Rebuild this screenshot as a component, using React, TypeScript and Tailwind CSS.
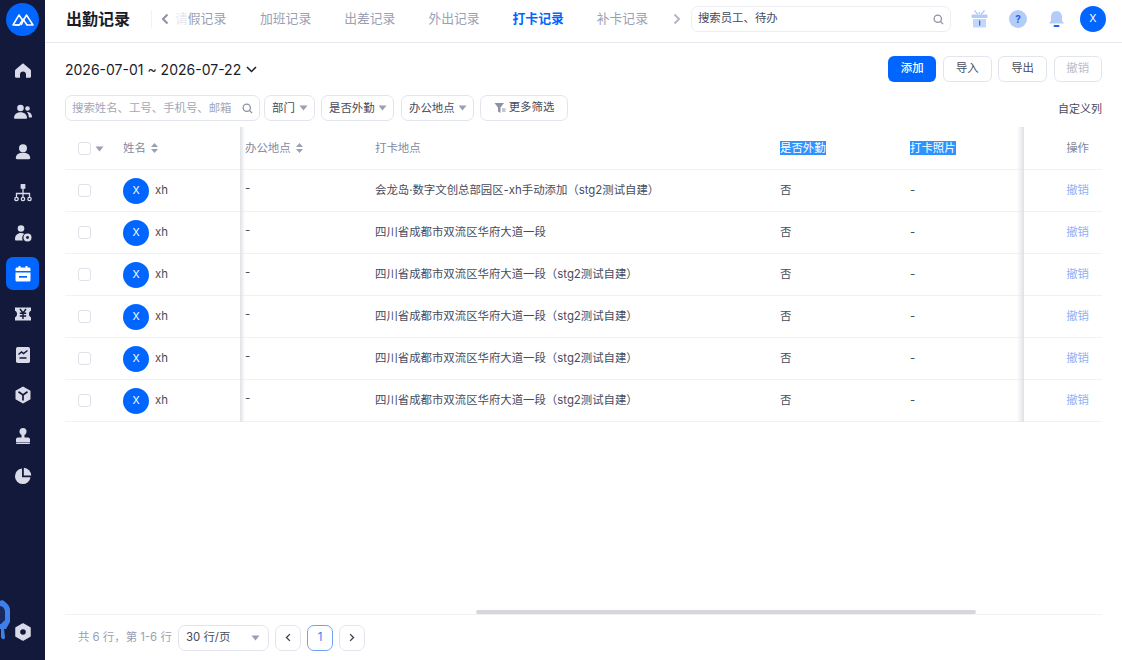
import React from "react";

const font = { fontFamily: '"Inter","Noto Sans CJK SC",sans-serif' };

const Caret = ({ c = "#9a9fb5" }: { c?: string }) => (
  <svg width="9" height="6" viewBox="0 0 9 6"><path d="M0.5 0.5h8L4.500 5.500z" fill={c} /></svg>
);
const Sort = () => (
  <svg width="7" height="10" viewBox="0 0 7 10" className="ml-[5px]">
    <path d="M3.500 0L7 4H0z M3.500 10L0 6h7z" fill="#9a9fb5" />
  </svg>
);
const Search = ({ c = "#8d91a3" }: { c?: string }) => (
  <svg width="11" height="11" viewBox="0 0 12 12" fill="none" stroke={c} strokeWidth="1.400">
    <circle cx="5.200" cy="5.200" r="4" /><path d="M8.200 8.200L11 11" />
  </svg>
);
const Chevron = ({ d, c = "#8d91a3", w = 2, s = 12 }: { d: "l" | "r"; c?: string; w?: number; s?: number }) => (
  <svg width={(s * 2) / 3} height={s} viewBox="0 0 8 12" fill="none" stroke={c} strokeWidth={w}>
    <path d={d === "l" ? "M6.500 1.500L2 6l4.500 4.500" : "M1.500 1.500L6 6l-4.500 4.500"} />
  </svg>
);

const ic = "#d9dce8";
const icons: React.ReactNode[] = [
  <path key="h" d="M10 2.200L2.600 8.400c-.5.500-.6 1-.6 1.600v5.200c0 1 .7 1.600 1.600 1.600H7v-3.400c0-1.700 1.300-3 3-3s3 1.300 3 3v3.400h3.400c.9 0 1.600-.6 1.600-1.600V10c0-.6-.1-1.100-.6-1.600z" fill={ic} />,
  <g key="t" fill={ic}><circle cx="7.500" cy="6" r="3.300" /><path d="M1 16c0-3.600 2.600-5.800 6.500-5.800S14 12.400 14 16c0 .5-.3.700-.7.700H1.700C1.300 16.700 1 16.500 1 16z" /><circle cx="14.500" cy="6.500" r="2.300" /><path d="M14.800 10c2.500.2 4.200 2 4.200 4.800 0 .5-.3.700-.7.700h-2.500c0-2.200-.5-4-1.800-5.200z" /></g>,
  <g key="p" fill={ic}><circle cx="10" cy="6.300" r="4" /><path d="M2.800 16c0-3.300 3.200-5.200 7.200-5.200s7.200 1.900 7.200 5.200c0 .7-.5 1.200-1.200 1.200H4c-.7 0-1.200-.5-1.200-1.200z" /></g>,
  <g key="o" fill="none" stroke={ic} strokeWidth="1.300"><rect x="8.300" y="1.700" width="3.400" height="3.400" fill={ic} /><path d="M10 5v5M3.500 14v-3.500h13V14M10 10.500V14" /><circle cx="3.500" cy="16" r="1.700" /><circle cx="10" cy="16" r="1.700" /><circle cx="16.500" cy="16" r="1.700" /></g>,
  <g key="s" fill={ic}><circle cx="8" cy="5.500" r="3.300" /><path d="M2 16c0-3.500 2.500-6 6-6 1.300 0 2.400.3 3.300.9-1.300 1-2.100 2.500-2.100 4.100 0 .9.200 1.700.6 2.500H3.300C2.500 17.500 2 17 2 16z" /><circle cx="14.500" cy="14.500" r="4" /><circle cx="14.500" cy="14.500" r="1.400" fill="#12193a" /></g>,
  null,
  <g key="y"><path d="M2 3.500h16v3.300c-1.500.5-2 1.800-2 3.200s.5 2.700 2 3.200v3.300H2v-3.300c1.500-.5 2-1.800 2-3.200s-.5-2.700-2-3.200z" fill={ic} /><path d="M7 5l3 4 3-4M6.800 9.300h6.400M6.800 12h6.400M10 9v6" stroke="#12193a" strokeWidth="1.400" fill="none" /></g>,
  <g key="c"><rect x="3" y="2" width="14" height="16" rx="1.800" fill={ic} /><path d="M5.500 9.500l3-2.500 2 1.500 4-3M6.500 13h7" stroke="#12193a" strokeWidth="1.500" fill="none" /></g>,
  <g key="b"><path d="M10 1.500l7.500 4.200v8.600L10 18.500l-7.500-4.200V5.700z" fill={ic} /><path d="M5.500 6.800L10 10l4.500-3.200M10 10v5.500" stroke="#12193a" strokeWidth="1.700" fill="none" /></g>,
  <g key="u" fill={ic}><circle cx="10" cy="5.500" r="3.500" /><path d="M8.500 8h3v3.500h3.500c1.200 0 2 .8 2 2v2.500H3v-2.500c0-1.200.8-2 2-2h3.500z" /><rect x="3" y="16.500" width="14" height="1.500" rx=".7" /></g>,
  <g key="pie" fill={ic}><path d="M9 2.500a7.800 7.800 0 1 0 8.500 8.700H9z" /><path d="M10.800 1.800a7.800 7.800 0 0 1 7.400 7.600h-7.400z" /></g>,
];

const SideIcon = ({ i, active }: { i: number; active?: boolean }) =>
  active ? (
    <div className="w-[33px] h-[33px] rounded-[7px] bg-[#0066ff] flex items-center justify-center">
      <svg width="20" height="20" viewBox="0 0 20 20">
        <path d="M2.500 7V5c0-1 .7-1.500 1.500-1.500h1.500V2h2v1.500h5V2h2v1.500H16c.8 0 1.500.5 1.500 1.500v2z" fill="#fff" />
        <path d="M2.500 8.500h15V16c0 1-.7 1.500-1.500 1.500H4c-.8 0-1.500-.5-1.500-1.500z" fill="#fff" />
        <rect x="6" y="12" width="8" height="1.700" fill="#0066ff" />
      </svg>
    </div>
  ) : (
    <div className="w-[33px] h-[33px] flex items-center justify-center">
      <svg width="20" height="20" viewBox="0 0 20 20">{icons[i]}</svg>
    </div>
  );

const Checkbox = () => <div className="w-[13px] h-[13px] rounded-[3px] border border-[#dfe1ea] bg-white" />;

const Avatar = () => (
  <div className="w-[26px] h-[26px] rounded-full bg-[#0066ff] text-white text-[10.5px] flex items-center justify-center shrink-0">X</div>
);

const Filter = ({ label, w }: { label: string; w: string }) => (
  <div className={`${w} h-[26px] shrink-0 rounded-[7px] border border-[#e3e5ee] flex items-center justify-between pl-[7px] pr-[6px] text-[11.4px] text-[#474b5c]`}>
    <span className="pt-[2px]">{label}</span>
    <Caret />
  </div>
);

const Btn = ({ label, cls }: { label: string; cls: string }) => (
  <div className={`w-[48.500px] h-[26px] rounded-[6px] flex items-center justify-center text-[11.4px] ${cls}`}>{label}</div>
);

const rows = [
  "会龙岛·数字文创总部园区-xh手动添加（stg2测试自建）",
  "四川省成都市双流区华府大道一段",
  "四川省成都市双流区华府大道一段（stg2测试自建）",
  "四川省成都市双流区华府大道一段（stg2测试自建）",
  "四川省成都市双流区华府大道一段（stg2测试自建）",
  "四川省成都市双流区华府大道一段（stg2测试自建）",
];

const tabs = ["加班记录", "出差记录", "外出记录", "打卡记录", "补卡记录"];

export default function App() {
  return (
    <div className="w-[1122px] h-[660px] flex overflow-hidden bg-white text-[#474b5c]" style={font}>
      <aside className="relative w-[45px] shrink-0 bg-[#12193a] flex flex-col items-center overflow-hidden">
        <div className="mt-[3px] w-[33px] h-[33px] rounded-full bg-[#0066ff] flex items-center justify-center">
          <svg width="22" height="13" viewBox="0 0 22 13" fill="none" stroke="#fff" strokeWidth="1.500" strokeLinejoin="round">
            <path d="M1 12L7 2l4 6 3.500-6L21 12h-6l-4-6-3.500 6z" />
            <path d="M3 12h4.500M11 8l-1.800 4" />
          </svg>
        </div>
        <div className="mt-[18.500px] flex flex-col gap-[7.500px] items-center">
          {[0, 1, 2, 3, 4, 5, 6, 7, 8, 9, 10].map((i) => (
            <SideIcon key={i} i={i} active={i === 5} />
          ))}
        </div>
        <svg className="absolute left-0 top-[596px]" width="12" height="50" viewBox="0 0 12 50">
          <path d="M-6 8L2 4c4 2 8 6 8 10v12l-4 7h-12z" fill="#3f7fe8" />
          <path d="M-6 14L1 10c3 2 4 3 4 6v8l-4 4h-7z" fill="#1a2860" />
          <path d="M1 33h3l1 8c0 3-3 3-4 0z" fill="#3f7fe8" />
        </svg>
        <svg className="absolute left-[13px] top-[622px]" width="20" height="20" viewBox="0 0 20 20">
          <path d="M10 2l7 4v8l-7 4-7-4V6z" fill={ic} stroke={ic} strokeLinejoin="round" strokeWidth="1.500" />
          <circle cx="10" cy="10" r="2.800" fill="#12193a" />
        </svg>
      </aside>

      <main className="relative flex-1 min-w-0 flex flex-col">
        <header className="h-[43px] shrink-0 border-b border-[#e6e8f0] flex items-center pb-[4px]">
          <div className="ml-[21px] w-[64px] text-[16px] font-bold text-[#1a1d29] whitespace-nowrap">出勤记录</div>
          <div className="ml-[21px] w-px h-[18px] bg-[#f1f2f6]" />
          <div className="ml-[9px]"><Chevron d="l" /></div>
          <div className="ml-[6px] w-[50px] text-[12.800px] text-[#9a9fb5] whitespace-nowrap text-right">
            <span className="opacity-25">请</span>假记录
          </div>
          <div className="ml-[35px] flex gap-[33px]">
            {tabs.map((t) => (
              <span key={t} className={`text-[12.800px] whitespace-nowrap ${t === "打卡记录" ? "font-bold text-[#0066ff]" : "text-[#9a9fb5]"}`}>{t}</span>
            ))}
          </div>
          <div className="ml-[25px]"><Chevron d="r" c="#b4b7c6" /></div>
          <div className="ml-[10px] w-[260px] h-[26px] rounded-[7px] border border-[#eceef4] flex items-center justify-between pl-[6px] pr-[6px] text-[11.400px] text-[#474b5c]">
            <span>搜索员工、待办</span>
            <Search />
          </div>
          <div className="ml-[20px] w-[18px] flex justify-center">
            <svg width="17" height="18" viewBox="0 0 17 18">
              <path d="M3.500 0.500l3.500 4M13.500 0.500l-3.500 4M8.500 4V2" stroke="#b3ccf8" strokeWidth="1.300" fill="none" />
              <rect x="0.500" y="4.500" width="16" height="3.500" rx="1.200" fill="#b3ccf8" />
              <rect x="2" y="9" width="13" height="8.500" fill="#c3d7fa" />
              <rect x="8" y="10.500" width="1.300" height="5" fill="#2b70ee" />
            </svg>
          </div>
          <div className="ml-[20px] w-[18px] h-[18px] rounded-full bg-[#b3ccf8] flex items-center justify-center text-[10px] font-bold text-[#1d63e8]">?</div>
          <div className="ml-[21px] w-[18px] flex justify-center">
            <svg width="17" height="18" viewBox="0 0 17 18">
              <path d="M8.500 1C5 1 3 3.800 3 7v3.500L1 13.500h15L14 10.500V7c0-3.200-2-6-5.500-6z" fill="#b3ccf8" />
              <rect x="5.500" y="15" width="6" height="2" rx="1" fill="#1d63e8" />
            </svg>
          </div>
          <div className="ml-[14px]"><Avatar /></div>
        </header>

        <div className="h-[52px] shrink-0 pl-[20px] pr-[20px] flex items-center justify-between">
          <div className="flex items-center gap-[5px] text-[14px] text-[#1a1d29] whitespace-nowrap">
            <span>2026-07-01 ~ 2026-07-22</span>
            <svg width="11" height="7" viewBox="0 0 11 7" fill="none" stroke="#1a1d29" strokeWidth="1.500"><path d="M1 1l4.500 4.500L10 1" /></svg>
          </div>
          <div className="flex gap-[6.700px] mt-[-1px]">
            <Btn label="添加" cls="bg-[#0066ff] text-white font-medium" />
            <Btn label="导入" cls="border border-[#e3e5ee] text-[#474b5c]" />
            <Btn label="导出" cls="border border-[#e3e5ee] text-[#474b5c]" />
            <Btn label="撤销" cls="border border-[#e3e5ee] text-[#b9bcc9]" />
          </div>
        </div>

        <div className="h-[26px] shrink-0 pl-[20px] pr-[20px] flex items-center">
          <div className="w-[195px] h-[26px] rounded-[7px] border border-[#e3e5ee] flex items-center justify-between pl-[6px] pr-[6px] text-[11.400px] text-[#a3a7b9]">
            <span className="whitespace-nowrap pt-[2px]">搜索姓名、工号、手机号、邮箱</span>
            <Search />
          </div>
          <div className="ml-[4px]"><Filter label="部门" w="w-[51px]" /></div>
          <div className="ml-[6px]"><Filter label="是否外勤" w="w-[73px]" /></div>
          <div className="ml-[7px]"><Filter label="办公地点" w="w-[73px]" /></div>
          <div className="ml-[6px] w-[88px] h-[26px] rounded-[7px] border border-[#e3e5ee] flex items-center justify-center gap-[3px] text-[11.400px]">
            <svg width="12" height="12" viewBox="0 0 12 12"><path d="M0.500 1h9.500L6.500 5.500V11L4 9.500v-4z" fill="#8d91a3" /><path d="M8 7h3.500M8 9h3.500" stroke="#8d91a3" strokeWidth="1" /></svg>
            <span>更多筛选</span>
          </div>
          <div className="ml-auto text-[11px] text-[#474b5c] pt-[2px]">自定义列</div>
        </div>

        <div className="relative mt-[6px] ml-[20px] mr-[20px] shrink-0 text-[11.400px]">
          <div className="h-[43px] pt-[1px] flex items-center border-b border-[#f1f2f6] text-[#83889d]">
            <div className="w-[58px] pl-[13px] flex items-center gap-[4px]"><Checkbox /><Caret /></div>
            <div className="w-[117px] flex items-center">姓名<Sort /></div>
            <div className="w-[135px] pl-[5px] flex items-center">办公地点<Sort /></div>
            <div className="w-[405px]">打卡地点</div>
            <div className="w-[130px]"><span className="bg-[#2e93ff] text-white">是否外勤</span></div>
            <div className="w-[114px]"><span className="bg-[#2e93ff] text-white">打卡照片</span></div>
            <div className="flex-1 text-right pr-[13px]">操作</div>
          </div>
          {rows.map((r, i) => (
            <div key={i} className="h-[42px] flex items-center border-b border-[#f1f2f6]">
              <div className="w-[58px] pl-[13px]"><Checkbox /></div>
              <div className="w-[117px] flex items-center gap-[6px]"><Avatar /><span className="pt-[1px]">xh</span></div>
              <div className="w-[135px] pl-[5px] mt-[-3px]">-</div>
              <div className="w-[405px] whitespace-nowrap pt-[1px]">{r}</div>
              <div className="w-[130px] pt-[1px]">否</div>
              <div className="w-[114px] pt-[1px]">-</div>
              <div className="flex-1 text-right pr-[13px] pt-[1px] text-[#8fb0f5]">撤销</div>
            </div>
          ))}
          <div className="absolute left-[175px] top-0 bottom-0 w-[5px] bg-gradient-to-r from-[#e0e1e5] to-transparent" />
          <div className="absolute left-[952px] top-0 bottom-0 w-[7px] bg-gradient-to-l from-[#e0e1e5] to-transparent" />
        </div>

        <div className="flex-1" />

        <div className="relative h-[46px] shrink-0 mx-[20px] border-t border-[#f1f2f6] flex items-center pl-[13px] text-[11.400px]">
          <div className="absolute left-[411px] top-[-5px] w-[500px] h-[4px] rounded-full bg-[#d6d7db]" />
          <span className="text-[#9a9fb5] whitespace-nowrap w-[93px]">共 6 行，第 1-6 行</span>
          <div className="ml-[7px] w-[91px] h-[26px] rounded-[7px] border border-[#e3e5ee] flex items-center justify-between pl-[7px] pr-[8px] text-[#474b5c]">
            <span>30 行/页</span>
            <Caret />
          </div>
          <div className="ml-[6px] w-[26px] h-[26px] rounded-[7px] border border-[#e3e5ee] flex items-center justify-center"><Chevron d="l" c="#3b3f50" w={1.800} s={9} /></div>
          <div className="ml-[6px] w-[26px] h-[26px] rounded-[7px] border border-[#6fa3f7] text-[#2e7bf5] flex items-center justify-center">1</div>
          <div className="ml-[6px] w-[26px] h-[26px] rounded-[7px] border border-[#e3e5ee] flex items-center justify-center"><Chevron d="r" c="#3b3f50" w={1.800} s={9} /></div>
        </div>
      </main>
    </div>
  );
}
